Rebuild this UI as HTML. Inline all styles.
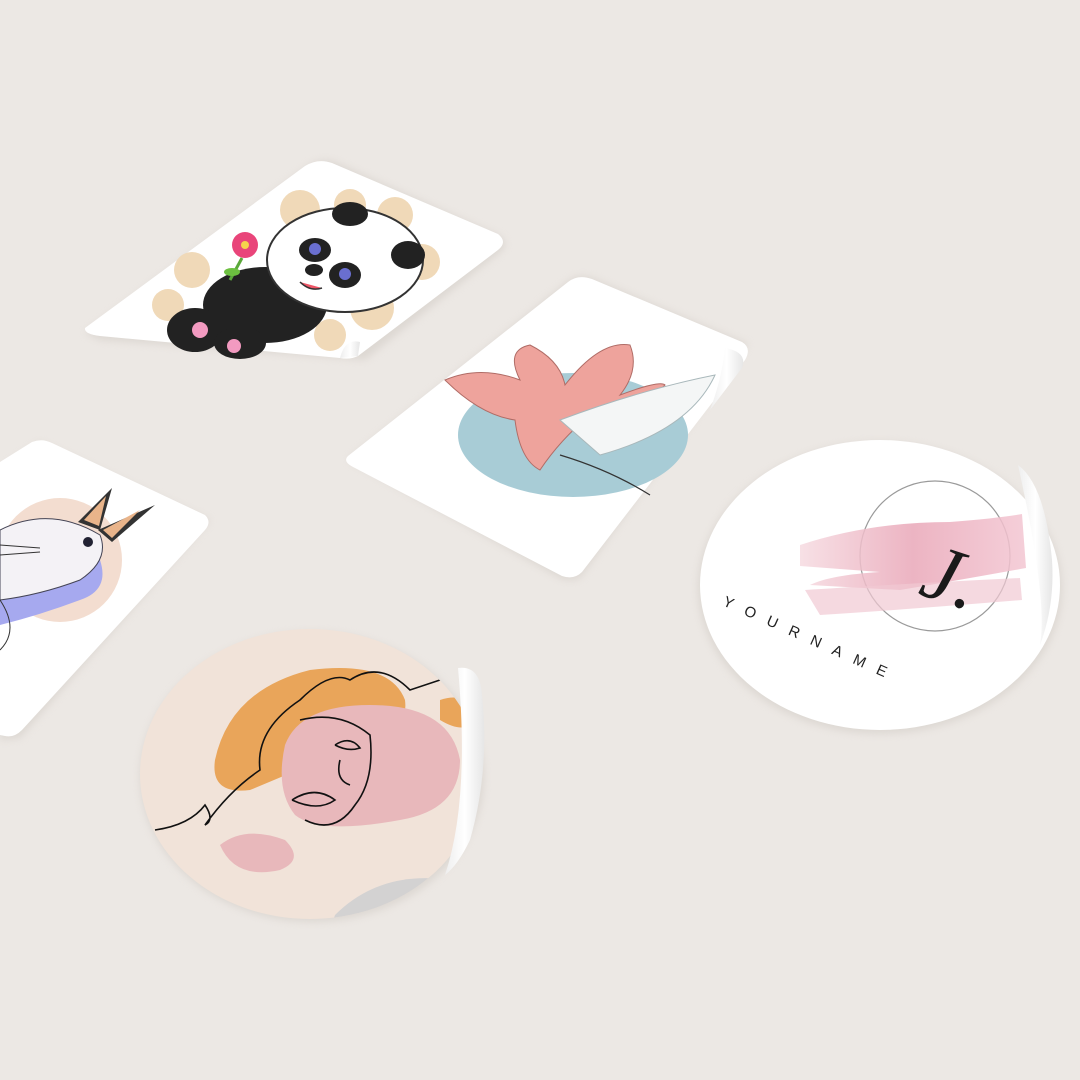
<!DOCTYPE html>
<html><head><meta charset="utf-8"><style>
html,body{margin:0;padding:0;background:#ece8e4;}
svg{display:block}
</style></head><body>
<svg width="1080" height="1080" viewBox="0 0 1080 1080" xmlns="http://www.w3.org/2000/svg">
<defs>
<filter id="sh" x="-20%" y="-20%" width="140%" height="140%"><feGaussianBlur stdDeviation="4"/></filter>
<linearGradient id="curl" x1="0" y1="0" x2="1" y2="0"><stop offset="0" stop-color="#eeeeee"/><stop offset="0.5" stop-color="#ffffff"/><stop offset="1" stop-color="#e6e6e6"/></linearGradient>
<linearGradient id="pk" x1="0" y1="0" x2="1" y2="0"><stop offset="0" stop-color="#f6dbe1"/><stop offset="0.5" stop-color="#e9a7b8"/><stop offset="1" stop-color="#f3c6d2"/></linearGradient>
</defs>
<rect width="1080" height="1080" fill="#ece8e4"/>

<g fill="#d3cdc7" opacity="0.6" filter="url(#sh)">
<path d="M85 333 L310 165 Q322 158 335 162 L500 236 Q510 245 500 252 L365 360 L100 340Z"/>
<path d="M348 460 L570 280 Q580 274 592 278 L748 344 L580 578 Q570 582 560 578Z"/>
<path d="M0 470 L40 442 L210 520 L20 738 L0 740Z"/>
<ellipse cx="312" cy="777" rx="172" ry="145"/>
<ellipse cx="880" cy="588" rx="182" ry="146"/>
</g>

<!-- panda sticker -->
<path d="M85 328 L305 166 Q318 158 332 163 L498 234 Q508 242 498 250 L358 356 Q350 360 340 358 L100 336 Q84 334 85 328Z" fill="#ffffff"/>
<g fill="#f0d9b8">
<circle cx="300" cy="210" r="20"/><circle cx="350" cy="205" r="16"/><circle cx="395" cy="215" r="18"/><circle cx="422" cy="262" r="18"/>
<circle cx="192" cy="270" r="18"/><circle cx="168" cy="305" r="16"/><circle cx="372" cy="308" r="22"/><circle cx="330" cy="335" r="16"/>
</g>
<ellipse cx="265" cy="305" rx="62" ry="38" fill="#222"/>
<ellipse cx="345" cy="260" rx="78" ry="52" fill="#fff" stroke="#333" stroke-width="2"/>
<ellipse cx="350" cy="214" rx="18" ry="12" fill="#222"/><ellipse cx="408" cy="255" rx="17" ry="14" fill="#222"/>
<ellipse cx="315" cy="250" rx="16" ry="12" fill="#222"/><ellipse cx="345" cy="275" rx="16" ry="13" fill="#222"/>
<circle cx="315" cy="249" r="6" fill="#6a6fd0"/><circle cx="345" cy="274" r="6" fill="#6a6fd0"/>
<ellipse cx="314" cy="270" rx="9" ry="6" fill="#222"/>
<path d="M300 282 Q310 292 322 288" stroke="#333" fill="#e56" stroke-width="1.5"/>
<ellipse cx="195" cy="330" rx="28" ry="22" fill="#222"/><ellipse cx="240" cy="343" rx="26" ry="16" fill="#222"/>
<circle cx="200" cy="330" r="8" fill="#f29ac0"/><circle cx="234" cy="346" r="7" fill="#f29ac0"/>
<circle cx="245" cy="245" r="13" fill="#e9457a"/><circle cx="245" cy="245" r="4" fill="#f6d24c"/>
<path d="M242 258 L230 280" stroke="#5aa83a" stroke-width="3"/><ellipse cx="232" cy="272" rx="8" ry="4" fill="#6cc040"/>
<path d="M340 358 Q345 338 360 342 L358 356Z" fill="url(#curl)"/>

<!-- lily sticker -->
<path d="M348 456 L568 282 Q578 274 592 279 L742 342 Q752 348 745 360 L582 572 Q574 580 562 576 L355 468 Q342 462 348 456Z" fill="#fff"/>
<ellipse cx="573" cy="435" rx="115" ry="62" fill="#a8ccd6"/>
<path d="M445 380 Q480 365 520 380 Q505 350 530 345 Q560 360 565 385 Q600 340 630 345 Q640 370 620 395 Q660 380 665 385 Q640 410 590 415 Q560 440 540 470 Q520 460 515 420 Q480 415 445 380Z" fill="#eea39c" stroke="#b06c66" stroke-width="1"/>
<path d="M560 420 Q640 390 715 375 Q690 430 600 455Z" fill="#f4f6f6" stroke="#a9b8bb" stroke-width="1"/>
<path d="M560 455 Q610 470 650 495" stroke="#333" stroke-width="1.2" fill="none"/>
<path d="M725 348 Q748 352 742 368 L710 410 Q722 378 725 348Z" fill="url(#curl)"/>

<!-- rabbit sticker -->
<path d="M0 462 L32 442 Q42 438 52 443 L205 515 Q212 522 205 530 L22 730 Q14 738 5 736 L0 735Z" fill="#fff"/>
<ellipse cx="60" cy="560" rx="62" ry="62" fill="#f3ddd0"/>
<path d="M0 560 Q40 590 100 560 Q110 590 80 600 Q40 615 0 625Z" fill="#a6a9ef"/>
<path d="M0 530 Q50 505 100 535 Q110 560 80 580 Q40 595 0 600Z" fill="#f4f2f6" stroke="#445" stroke-width="1"/>
<path d="M78 522 L112 488 L100 530Z M98 530 L155 505 L112 542Z" fill="#333"/>
<path d="M84 520 L106 496 L99 526Z M103 530 L140 510 L112 538Z" fill="#e9b48a"/>
<circle cx="88" cy="542" r="5" fill="#223"/>
<path d="M0 545 L40 548 M0 555 L40 552 M0 600 Q20 630 0 650" stroke="#333" stroke-width="1" fill="none"/>

<!-- face circle sticker -->
<clipPath id="fc"><ellipse cx="310" cy="774" rx="170" ry="145"/></clipPath>
<ellipse cx="310" cy="774" rx="170" ry="145" fill="#f1e3d9"/>
<g clip-path="url(#fc)">
<path d="M215 760 Q230 690 310 670 Q390 660 405 700 Q410 740 350 745 Q300 770 250 790 Q210 795 215 760Z" fill="#e9a55a"/>
<path d="M285 745 Q300 705 370 705 Q450 705 460 760 Q460 810 400 820 Q320 835 295 815 Q275 790 285 745Z" fill="#e8b8bb"/>
<path d="M220 845 Q245 825 285 840 Q305 860 280 870 Q235 880 220 845Z" fill="#e8b8bb"/>
<path d="M335 915 Q380 870 450 880 L480 930 L330 930Z" fill="#d3d2d2"/>
<path d="M440 700 Q470 690 475 720 Q465 735 440 720Z" fill="#e9a55a"/>
<path d="M155 830 Q190 825 205 805 Q215 820 205 825 Q230 790 260 770 Q255 730 300 700 Q330 670 350 680 Q380 660 410 690 Q440 680 470 670 M300 720 Q340 710 370 735 Q375 780 355 805 Q335 835 305 820 M292 800 Q315 785 335 800 Q318 812 292 800 M335 745 Q350 735 360 748 Q348 752 335 745 M340 760 Q335 780 350 785" stroke="#111" stroke-width="1.6" fill="none"/>
</g>
<path d="M458 668 Q480 665 482 695 Q490 770 470 840 Q458 865 445 875 Q470 800 458 668Z" fill="url(#curl)"/>

<!-- logo oval sticker -->
<ellipse cx="880" cy="585" rx="180" ry="145" fill="#fff"/>
<path d="M1018 465 Q1045 485 1052 560 Q1055 605 1040 645 Q1048 600 1018 465Z" fill="url(#curl)"/>
<circle cx="935" cy="556" r="75" fill="none" stroke="#9a9a9a" stroke-width="1.2"/>
<path d="M800 545 Q870 522 950 522 Q1000 518 1022 514 L1026 568 Q960 580 900 590 L810 585 Q830 575 880 572 L800 566Z" fill="url(#pk)" opacity="0.85"/>
<path d="M805 590 Q880 585 1020 578 L1022 600 Q900 610 820 615Z" fill="#f1c9d3" opacity="0.7"/>
<text x="925" y="598" font-family="Liberation Serif, serif" font-size="80" font-style="italic" fill="#1a1a1a" transform="rotate(18 935 570)">J.</text>
<text x="722" y="605" font-family="Liberation Sans, sans-serif" font-size="15" letter-spacing="13" fill="#222" transform="rotate(24 722 605)">YOURNAME</text>
</svg>
</body></html>
